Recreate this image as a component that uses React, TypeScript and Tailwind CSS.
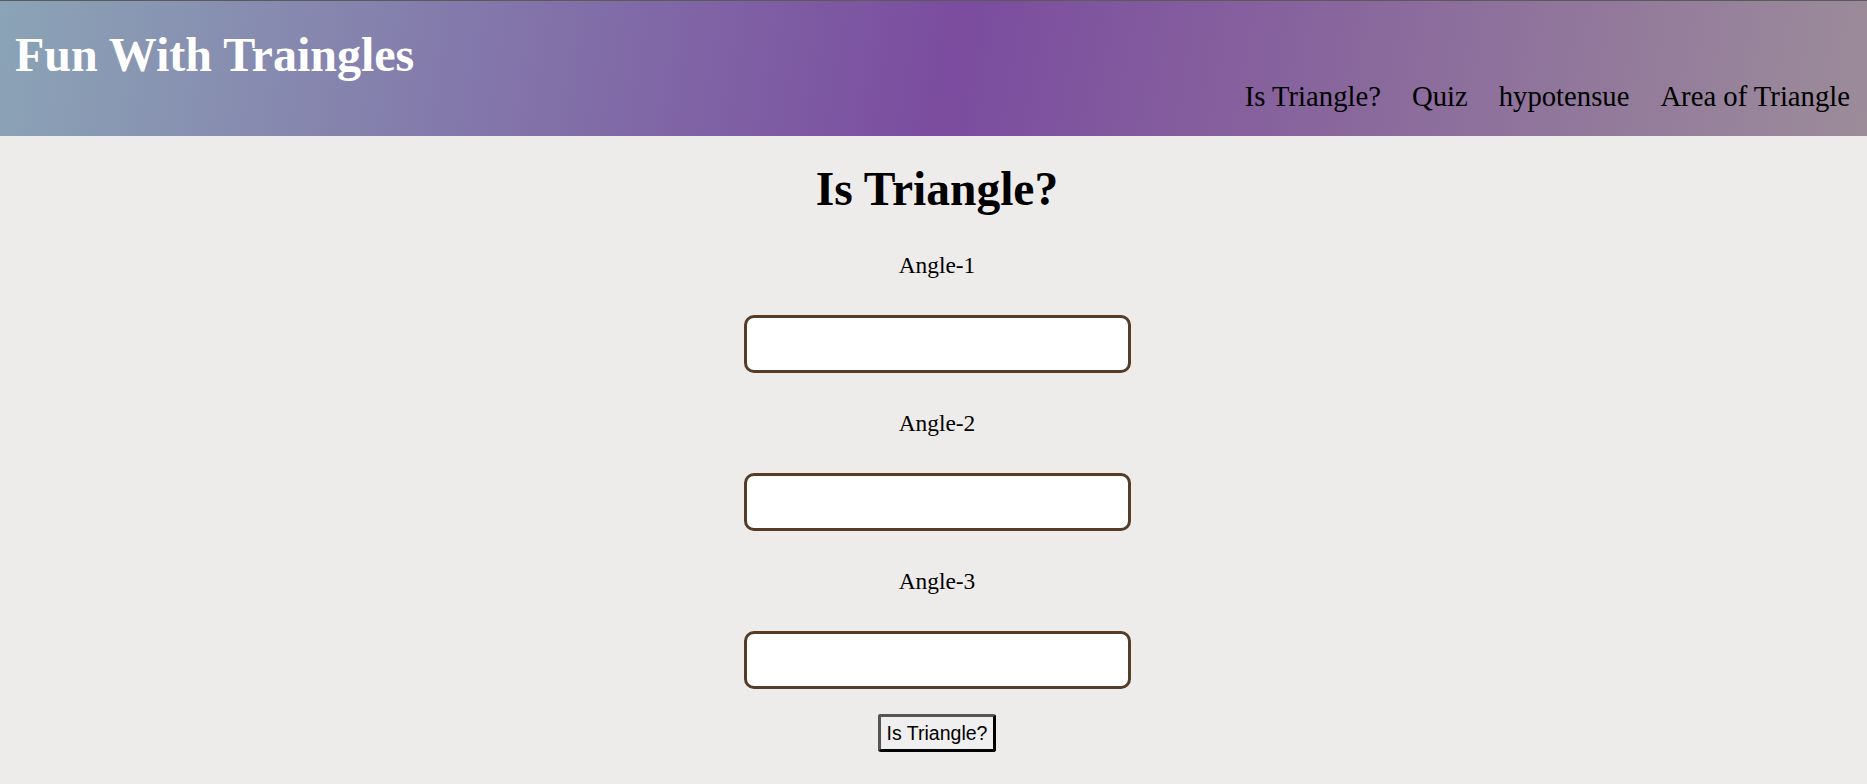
const links = ['Is Triangle?', 'Quiz', 'hypotensue', 'Area of Triangle'];
const angles = ['Angle-1', 'Angle-2', 'Angle-3'];

function Header() {
  return (
    <header className="flex h-[136px] justify-between border-t border-[#5a5a5a] bg-[linear-gradient(100deg,#8ba4b6_0%,#7b4c9f_51%,#9c8c9a_100%)]">
      <h1 className="ml-[15px] mt-[27px] text-[48px] font-bold leading-[53px] text-white">
        Fun With Traingles
      </h1>
      <nav className="mr-[17px] mt-[79px] flex gap-[31px]">
        {links.map((l) => (
          <a key={l} href="#" className="text-[28.7px] leading-[32px] text-black">
            {l}
          </a>
        ))}
      </nav>
    </header>
  );
}

export default function App() {
  return (
    <div className="h-[784px] overflow-hidden bg-[#eeecea] font-['Liberation_Serif','Times_New_Roman',serif]">
      <Header />
      <main className="flex flex-col items-center pl-[7px]">
        <h1 className="mt-[27px] text-[47.5px] font-bold leading-[52px] text-black">Is Triangle?</h1>
        {angles.map((a) => (
          <div key={a} className="flex flex-col items-center">
            <label className="mt-[37px] text-[23.4px] leading-[26px] text-black">{a}</label>
            <input
              type="number"
              className="mt-[37px] h-[58px] w-[387px] rounded-[10px] border-[3px] border-[#543c26] bg-white px-3 text-[23px] outline-none"
            />
          </div>
        ))}
        <button className="mt-[25px] rounded-[3px] border-[3px] border-b-black border-l-[#555] border-r-black border-t-[#555] bg-[#efefef] px-[6px] py-[5px] font-['Liberation_Sans',Arial,sans-serif] text-[19.5px] leading-[22px] text-black">
          Is Triangle?
        </button>
      </main>
    </div>
  );
}
